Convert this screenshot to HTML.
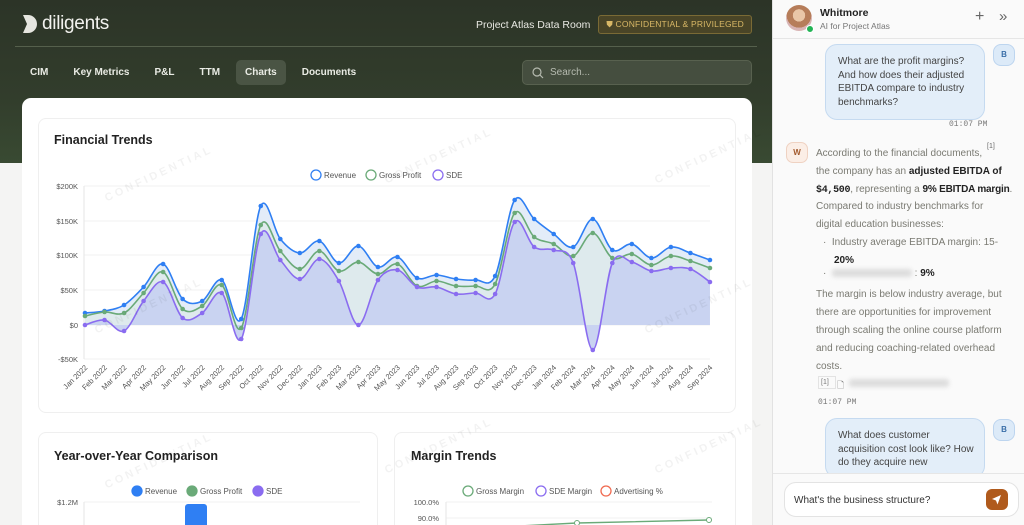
<!DOCTYPE html>
<html><head><meta charset="utf-8">
<style>
*{box-sizing:border-box;margin:0;padding:0}
body{width:1024px;height:525px;overflow:hidden;font-family:"Liberation Sans",Arial,sans-serif;background:#f4f4f3;position:relative}
.left{position:absolute;left:0;top:0;width:772px;height:525px;background:#f4f4f3;overflow:hidden}
.hdr{position:absolute;left:0;top:0;width:772px;height:163px;background:linear-gradient(180deg,#2c3427 0%,#323d2c 60%,#394a32 100%)}
.logo{position:absolute;left:22px;top:13px;display:flex;align-items:center;color:#f2f2ee;font-size:19px;letter-spacing:-0.3px}
.top-r{position:absolute;right:20px;top:15px;display:flex;align-items:center;gap:8px;font-size:10.5px;color:#e8e8e2}
.badge{border:1px solid #7a6a35;background:#4a4527;color:#d9b866;font-size:8.5px;padding:3px 7px;border-radius:3px;letter-spacing:.2px}
.rule{position:absolute;left:15px;right:15px;top:46px;height:1px;background:#55604c}
.tabs{position:absolute;left:21px;top:60px;display:flex;gap:0;font-size:10px;color:#e9ebe4;font-weight:bold}
.tabs span{padding:7px 9px;margin-right:7px;border-radius:5px}
.tabs .on{background:#4a5444}
.search{position:absolute;left:522px;top:60px;width:230px;height:25px;border-radius:5px;background:#454e3f;border:1px solid #58614f;color:#b6bbb0;font-size:10px;padding:6px 0 0 27px}
.card{position:absolute;left:22px;top:98px;width:730px;height:440px;background:#fff;border-radius:9px}
.box{position:absolute;border:1px solid #efefef;border-radius:8px;background:#fff}
.title{position:absolute;font-size:12.5px;font-weight:bold;color:#222}
.side{position:absolute;left:772px;top:0;width:252px;height:525px;background:#fafafa;border-left:1px solid #e2e2e2}
.wm{position:absolute;font-size:11px;color:rgba(0,0,0,.05);letter-spacing:3px;transform:rotate(-25deg);font-weight:bold}
.ubub{position:absolute;left:52px;width:160px;background:#e3eef9;border:1px solid #c5daf0;border-radius:12px;color:#444;font-size:10px;line-height:13.5px;padding:10px 10px 10px 12px}
.bav{position:absolute;left:220px;width:22px;height:22px;border-radius:8px;background:#dceaf8;border:1px solid #bdd5ef;color:#3a6ea8;font-size:8px;font-weight:bold;text-align:center;line-height:20px}
.ai{position:absolute;left:43px;font-size:10px;color:#7a7a72;line-height:18px;white-space:nowrap}
.ai b{color:#222}
.time{position:absolute;font-family:"Liberation Mono",monospace;font-size:8px;color:#777}
.blur{display:inline-block;background:#ddd;filter:blur(2px);height:8px;vertical-align:middle;border-radius:3px}
</style></head><body>
<div class="left">
<div class="hdr"></div>
<div class="logo"><svg width="16" height="20" viewBox="0 0 16 20"><path d="M1 1h5a9 9 0 0 1 0 18H1l4-9z" fill="#e6e6e0"/></svg><span style="margin-left:4px">diligents</span></div>
<div class="top-r"><span>Project Atlas Data Room</span><span class="badge">⛊ CONFIDENTIAL &amp; PRIVILEGED</span></div>
<div class="rule"></div>
<div class="tabs"><span>CIM</span><span>Key Metrics</span><span>P&amp;L</span><span>TTM</span><span class="on">Charts</span><span>Documents</span></div>
<div class="search"><svg style="position:absolute;left:9px;top:6px" width="12" height="12" viewBox="0 0 12 12"><circle cx="5" cy="5" r="4" fill="none" stroke="#b6bbb0" stroke-width="1.2"/><path d="M8 8l3 3" stroke="#b6bbb0" stroke-width="1.2"/></svg>Search...</div>
<div class="card"></div>
<div class="box" style="left:38px;top:118px;width:698px;height:295px"></div>
<div class="title" style="left:54px;top:133px">Financial Trends</div>
<div class="box" style="left:38px;top:432px;width:340px;height:110px"></div>
<div class="box" style="left:394px;top:432px;width:342px;height:110px"></div>
<div class="title" style="left:54px;top:449px">Year-over-Year Comparison</div>
<div class="title" style="left:411px;top:449px">Margin Trends</div>
<svg id="ch" style="position:absolute;left:0;top:0" width="772" height="525" font-family="Liberation Sans,Arial,sans-serif" font-size="8" fill="#555"></svg>
<div class="wm" style="left:100px;top:168px">CONFIDENTIAL</div>
<div class="wm" style="left:380px;top:150px">CONFIDENTIAL</div>
<div class="wm" style="left:650px;top:150px">CONFIDENTIAL</div>
<div class="wm" style="left:90px;top:300px">CONFIDENTIAL</div>
<div class="wm" style="left:640px;top:300px">CONFIDENTIAL</div>
<div class="wm" style="left:100px;top:455px">CONFIDENTIAL</div>
<div class="wm" style="left:380px;top:440px">CONFIDENTIAL</div>
<div class="wm" style="left:650px;top:440px">CONFIDENTIAL</div>
</div>
<div class="side">
<div style="position:absolute;left:13px;top:5px;width:26px;height:26px;border-radius:50%;background:radial-gradient(circle at 50% 40%,#e9c6a8 0 30%,#b67d5a 31% 60%,#d8b4b4 61%)"></div>
<div style="position:absolute;left:33px;top:25px;width:8px;height:8px;border-radius:50%;background:#22b455;border:1.5px solid #fff"></div>
<div style="position:absolute;left:47px;top:7px;font-size:10.5px;font-weight:bold;color:#222">Whitmore</div>
<div style="position:absolute;left:47px;top:21px;font-size:8.5px;color:#777">AI for Project Atlas</div>
<div style="position:absolute;left:202px;top:8px;font-size:16px;color:#666">+</div>
<div style="position:absolute;left:226px;top:8px;font-size:15px;color:#666">»</div>
<div style="position:absolute;left:0;top:38px;width:252px;height:1px;background:#e6e6e6"></div>
<div class="ubub" style="top:44px">What are the profit margins? And how does their adjusted EBITDA compare to industry benchmarks?</div>
<div class="bav" style="top:44px">B</div>
<div class="time" style="left:176px;top:120px">01:07 PM</div>
<div style="position:absolute;left:13px;top:142px;width:22px;height:21px;border-radius:7px;background:#fbeee6;border:1px solid #efd2c2;color:#a2582b;font-size:8px;font-weight:bold;text-align:center;line-height:19px">W</div>
<div style="position:absolute;left:214px;top:143px;font-size:7px;color:#666">[1]</div>
<div class="ai" style="top:145px">According to the financial documents,<br>the company has an <b>adjusted EBITDA of</b><br><b style="font-family:Liberation Mono,monospace;letter-spacing:-0.3px">$4,500</b>, representing a <b style="letter-spacing:-0.2px">9% EBITDA margin</b>.</div>
<div class="ai" style="top:198px">Compared to industry benchmarks for<br>digital education businesses:</div>
<div class="ai" style="top:234px;left:50px">· &nbsp;Industry average EBITDA margin: 15-<br><b style="margin-left:11px">20%</b></div>
<div class="ai" style="top:265px;left:50px">· &nbsp;<span class="blur" style="width:80px"></span> : <b>9%</b></div>
<div class="ai" style="top:286px">The margin is below industry average, but<br>there are opportunities for improvement<br>through scaling the online course platform<br>and reducing coaching-related overhead<br>costs.</div>
<div style="position:absolute;left:45px;top:376px;width:18px;height:13px;border:1px solid #e3e3e3;font-size:7px;color:#777;padding:2px">[1]</div>
<div style="position:absolute;left:64px;top:378px;font-size:9px;color:#777">🗋</div>
<div class="blur" style="position:absolute;left:76px;top:379px;width:100px"></div>
<div class="time" style="left:45px;top:398px">01:07 PM</div>
<div class="ubub" style="top:418px;height:60px">What does customer acquisition cost look like? How do they acquire new</div>
<div class="bav" style="top:419px">B</div>
<div style="position:absolute;left:0;top:473px;width:252px;height:52px;background:#fafafa;border-top:1px solid #e6e6e6"></div>
<div style="position:absolute;left:11px;top:482px;width:235px;height:35px;border:1px solid #e3e3e3;border-radius:12px;background:#fff;font-size:10px;color:#333;padding:12px 0 0 9px">What's the business structure?</div>
<div style="position:absolute;left:213px;top:489px;width:22px;height:21px;border-radius:6px;background:#b05a1c"><svg width="22" height="21" viewBox="0 0 22 21"><path d="M15 6L6 10l4 1.5 1.5 4z" fill="#fff"/></svg></div>
</div>
<script>
const svg=document.getElementById('ch');let h='';
const X0=85,DX=19.53;
const rev=[313,311,305,287,264,299,301,280,319,206,239,253,241,263,246,267,257,278,275,279,280,276,200,219,234,247,219,250,244,258,247,253,260];
const gp=[316,312,313,293,272,309,306,285,328,225,251,269,251,271,262,274,264,286,281,286,286,284,213,237,244,256,233,258,254,265,256,261,268];
const sde=[325,320,331,301,282,318,313,293,339,234,260,279,259,281,325,280,270,287,287,294,293,294,222,247,250,263,350,263,262,271,268,269,282];
function pth(a){let p=[];a.forEach((y,i)=>p.push([X0+i*DX,y]));let d='M'+p[0][0]+','+p[0][1];
for(let i=0;i<p.length-1;i++){const p0=p[i-1]||p[i],p1=p[i],p2=p[i+1],p3=p[i+2]||p2;
d+=` C${p1[0]+(p2[0]-p0[0])/6},${p1[1]+(p2[1]-p0[1])/6} ${p2[0]-(p3[0]-p1[0])/6},${p2[1]-(p3[1]-p1[1])/6} ${p2[0]},${p2[1]}`;}return d;}
const xe=X0+32*DX;
[[186,'$200K'],[221,'$150K'],[255,'$100K'],[290,'$50K'],[325,'$0'],[359,'-$50K']].forEach(([y,t])=>{h+=`<line x1="84" x2="${xe}" y1="${y}" y2="${y}" stroke="#f0f0f0"/><text x="78" y="${y+3}" text-anchor="end" font-size="7.5">${t}</text>`});
h+=`<line x1="84" x2="84" y1="186" y2="359" stroke="#e6e6e6"/>`;
h+=`<path d="${pth(rev)} L${xe},325 L${X0},325Z" fill="#e3ecf8"/>`;
h+=`<path d="${pth(gp)} L${xe},325 L${X0},325Z" fill="#dbe9e6" opacity=".6"/>`;
h+=`<path d="${pth(sde)} L${xe},325 L${X0},325Z" fill="#c9d3f1"/>`;
[[rev,'#2f7ff3'],[gp,'#6aaa78'],[sde,'#8a6cf0']].forEach(([a,c])=>{h+=`<path d="${pth(a)}" fill="none" stroke="${c}" stroke-width="1.6"/>`;a.forEach((y,i)=>h+=`<circle cx="${X0+i*DX}" cy="${y}" r="2.3" fill="${c}"/>`)});
const m=['Jan','Feb','Mar','Apr','May','Jun','Jul','Aug','Sep','Oct','Nov','Dec'];
for(let i=0;i<33;i++){const x=X0+i*DX+3;const t=m[i%12]+' '+(2022+Math.floor(i/12));h+=`<text x="${x}" y="368" text-anchor="end" transform="rotate(-45 ${x} 368)" font-size="7.5">${t}</text>`}
function leg(x,y,c,t,fill){h+=`<circle cx="${x}" cy="${y}" r="5" fill="${fill?c:'#fff'}" stroke="${c}" stroke-width="1.3"/><text x="${x+8}" y="${y+3}" font-size="8">${t}</text>`}
leg(316,175,'#2f7ff3','Revenue');leg(371,175,'#6aaa78','Gross Profit');leg(438,175,'#8a6cf0','SDE');
leg(137,491,'#2f7ff3','Revenue',1);leg(192,491,'#6aaa78','Gross Profit',1);leg(258,491,'#8a6cf0','SDE',1);
leg(468,491,'#6aaa78','Gross Margin');leg(541,491,'#8a6cf0','SDE Margin');leg(606,491,'#f06a50','Advertising %');
h+=`<text x="78" y="505" text-anchor="end" font-size="7.5">$1.2M</text><line x1="84" x2="360" y1="502" y2="502" stroke="#f0f0f0"/><line x1="84" x2="84" y1="502" y2="525" stroke="#e6e6e6"/><rect x="185" y="504" width="22" height="30" rx="3" fill="#2f7ff3"/>`;
h+=`<text x="439" y="505" text-anchor="end" font-size="7.5">100.0%</text><text x="439" y="521" text-anchor="end" font-size="7.5">90.0%</text><line x1="446" x2="712" y1="502" y2="502" stroke="#f0f0f0"/><line x1="446" x2="712" y1="518" y2="518" stroke="#f0f0f0"/><line x1="446" x2="446" y1="502" y2="525" stroke="#e6e6e6"/><path d="M500,527 L577,523 L709,520" stroke="#6aaa78" stroke-width="1.4" fill="none"/><circle cx="577" cy="523" r="2.5" fill="#fff" stroke="#6aaa78"/><circle cx="709" cy="520" r="2.5" fill="#fff" stroke="#6aaa78"/>`;
svg.innerHTML=h;
</script>
</body></html>
